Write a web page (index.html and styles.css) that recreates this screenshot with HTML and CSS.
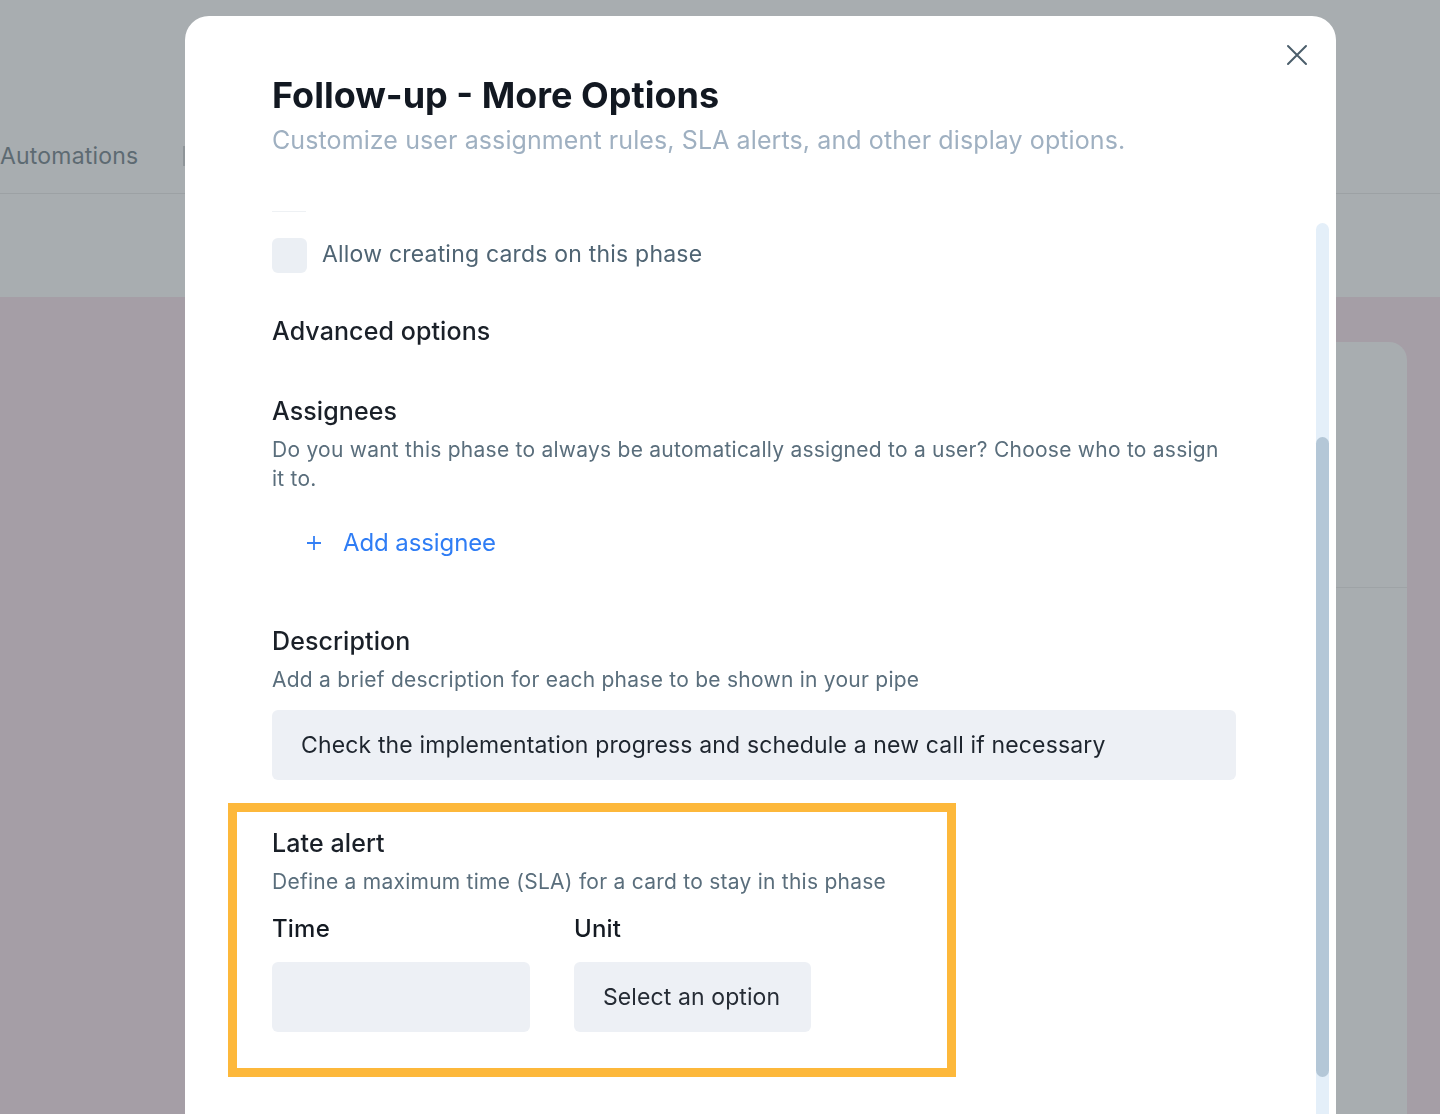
FILE: index.html
```html
<!DOCTYPE html>
<html lang="en">
<head>
<meta charset="utf-8">
<title>Follow-up - More Options</title>
<link rel="stylesheet" href="styles.css">
</head>
<body>
<div class="page">
  <header class="topbar">
    <nav class="tabs">
      <span class="tab">Automations</span>
      <span class="tab-sep"></span>
    </nav>
  </header>
  <div class="subbar"></div>
  <main class="board">
    <section class="phase-card">
      <div class="phase-card-head"></div>
    </section>
  </main>
</div>

<div class="modal" role="dialog" aria-labelledby="modal-title">
  <button class="close" aria-label="Close">
    <svg width="24" height="24" viewBox="0 0 24 24" fill="none" stroke="#4b5e6b" stroke-width="2" stroke-linecap="round"><path d="M3 3L21 21M21 3L3 21"/></svg>
  </button>
  <div class="modal-head">
    <h1 id="modal-title" class="title">Follow-up - More Options</h1>
    <p class="subtitle">Customize user assignment rules, SLA alerts, and other display options.</p>
  </div>
  <div class="modal-body">
    <div class="stub"></div>
    <label class="check-row">
      <span class="checkbox"></span>
      <span class="check-label">Allow creating cards on this phase</span>
    </label>
    <h2 class="section-title adv">Advanced options</h2>

    <h3 class="field-title assignees">Assignees</h3>
    <p class="field-desc">Do you want this phase to always be automatically assigned to a user? Choose who to assign it to.</p>
    <button class="add-link">
      <svg width="18" height="18" viewBox="0 0 18 18" fill="none" stroke="#3580f5" stroke-width="1.8"><path d="M9 2V16M2 9H16"/></svg>
      <span>Add assignee</span>
    </button>

    <h3 class="field-title description">Description</h3>
    <p class="field-desc">Add a brief description for each phase to be shown in your pipe</p>
    <div class="textbox">Check the implementation progress and schedule a new call if necessary</div>

    <div class="late-alert">
      <h3 class="field-title late-title">Late alert</h3>
      <p class="field-desc">Define a maximum time (SLA) for a card to stay in this phase</p>
      <div class="sla-row">
        <div class="sla-col time-col">
          <div class="sla-label">Time</div>
          <div class="input time-input"></div>
        </div>
        <div class="sla-col unit-col">
          <div class="sla-label">Unit</div>
          <div class="input select-input">Select an option</div>
        </div>
      </div>
    </div>
  </div>
  <div class="scroll-track"><div class="scroll-thumb"></div></div>
</div>
</body>
</html>
```

FILE: styles.css
```css
* { box-sizing: border-box; }
html, body { margin: 0; padding: 0; }
body {
  width: 1440px;
  height: 1114px;
  overflow: hidden;
  font-family: Inter, "Noto Sans", "Liberation Sans", sans-serif;
  background: #a59ea6;
}
.page { width: 1440px; }
.topbar {
  height: 194px;
  background: #a8adb0;
  border-bottom: 1px solid #9ca1a4;
  padding-top: 137px;
}
.tabs {
  display: flex;
  align-items: center;
  height: 38px;
}
.tab {
  font-size: 23px;
  line-height: 38px;
  color: #5d6a72;
  letter-spacing: 0.2px;
}
.tab-sep {
  width: 2px;
  height: 20px;
  background: #8f9599;
  margin-left: 45px;
}
.subbar {
  height: 103px;
  background: #a8adb0;
}
.board {
  display: flex;
  justify-content: flex-end;
  padding: 45px 33px 0 0;
  height: 817px;
}
.phase-card {
  width: 420px;
  height: 100%;
  background: #a8adb0;
  border-top-right-radius: 18px;
}
.phase-card-head {
  height: 246px;
  border-bottom: 1px solid #9ea3a6;
}

.modal {
  position: fixed;
  left: 185px;
  top: 16px;
  width: 1151px;
  height: 1130px;
  background: #ffffff;
  border-radius: 24px;
  overflow: hidden;
}
.close {
  position: absolute;
  right: 27px;
  top: 27px;
  width: 24px;
  height: 24px;
  padding: 0;
  border: 0;
  background: transparent;
  display: flex;
}
.modal-head {
  padding: 57px 87px 40px;
}
.title {
  margin: 0;
  font-size: 36px;
  line-height: 44px;
  font-weight: 700;
  color: #121821;
  letter-spacing: 0px;
}
.subtitle {
  margin: 7px 0 0;
  font-size: 25px;
  line-height: 32px;
  color: #9fb0c1;
  letter-spacing: 0.1px;
}
.modal-body {
  padding: 0 100px 0 87px;
}
.stub {
  margin-top: 15px;
  width: 34px;
  height: 1px;
  background: #eef1f4;
}
.check-row {
  display: flex;
  align-items: center;
  margin-top: 26px;
  height: 35px;
}
.checkbox {
  width: 35px;
  height: 35px;
  border-radius: 6px;
  background: #ebeff4;
}
.check-label {
  margin: -3px 0 0 15px;
  font-size: 23px;
  line-height: 32px;
  color: #4f6473;
  letter-spacing: 0.2px;
}
.section-title, .field-title {
  margin: 0;
  font-size: 25px;
  line-height: 32px;
  font-weight: 500;
  color: #1a2028;
  letter-spacing: 0.1px;
}
.adv { margin-top: 42px; }
.assignees { margin-top: 48px; }
.field-desc {
  margin: 8px 0 0;
  font-size: 21px;
  line-height: 29px;
  color: #5a6e7c;
  letter-spacing: 0.25px;
}
.add-link {
  display: flex;
  align-items: center;
  gap: 20px;
  margin: 34px 0 0 33px;
  padding: 0;
  height: 32px;
  border: 0;
  background: transparent;
  font-family: inherit;
  font-size: 24px;
  line-height: 32px;
  color: #2f7df5;
  letter-spacing: -0.1px;
}
.description { margin-top: 66px; }
.textbox {
  margin-top: 16px;
  height: 70px;
  border-radius: 6px;
  background: #edf0f5;
  display: flex;
  align-items: center;
  padding-left: 29px;
  font-size: 23px;
  color: #1e252e;
  letter-spacing: 0.15px;
}
.late-alert {
  margin: 23px 0 0 -44px;
  width: 728px;
  border: 9px solid #fdb83b;
  padding: 15px 0 36px 35px;
}
.sla-row {
  display: flex;
  gap: 44px;
  margin-top: 17px;
}
.sla-label {
  font-size: 24px;
  line-height: 32px;
  font-weight: 500;
  color: #141a22;
  letter-spacing: 0.2px;
}
.input {
  margin-top: 17px;
  height: 70px;
  border-radius: 6px;
  background: #edf0f5;
}
.time-input { width: 258px; }
.select-input {
  width: 237px;
  display: flex;
  align-items: center;
  padding-left: 29px;
  font-size: 23px;
  color: #262c35;
  letter-spacing: 0.1px;
}
.scroll-track {
  position: absolute;
  left: 1131px;
  top: 207px;
  width: 13px;
  height: 940px;
  border-radius: 7px;
  background: #e4eff9;
}
.scroll-thumb {
  margin-top: 214px;
  height: 640px;
  border-radius: 7px;
  background: #b4c7d7;
}
```
